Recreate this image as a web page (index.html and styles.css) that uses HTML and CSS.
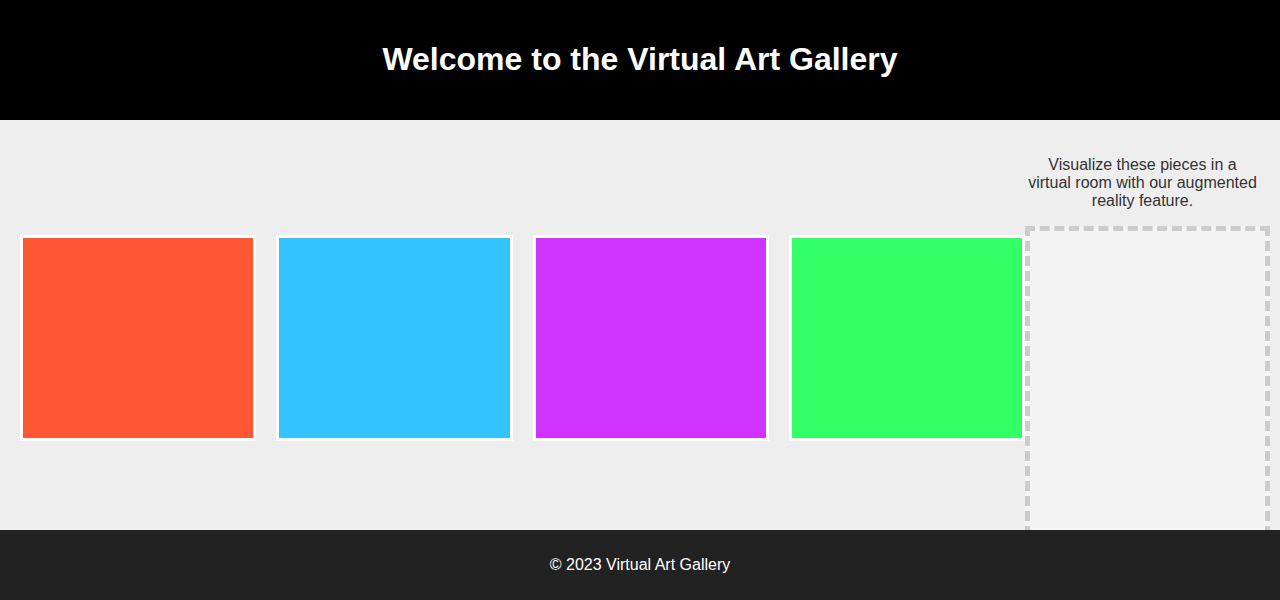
FILE: index.html
```html
<!DOCTYPE html>
<html lang="en">
<head>
<meta charset="utf-8">
<title>Virtual Art Gallery</title>
<link rel="stylesheet" href="styles.css">
</head>
<body>
<header class="site-header">
  <h1 class="title">Welcome to the Virtual Art Gallery</h1>
</header>
<main class="gallery">
  <div class="pieces">
    <div class="art-piece art-orange"></div>
    <div class="art-piece art-blue"></div>
    <div class="art-piece art-purple"></div>
    <div class="art-piece art-green"></div>
  </div>
  <section class="ar-section">
    <p class="ar-text">Visualize these pieces in a virtual room with our augmented reality feature.</p>
    <div class="ar-viewer"></div>
  </section>
</main>
<footer class="site-footer">
  <p class="copy">© 2023 Virtual Art Gallery</p>
</footer>
</body>
</html>
```

FILE: styles.css
```css
html, body {
  margin: 0;
  padding: 0;
}
body {
  height: 100vh;
  display: grid;
  grid-template-rows: 120px 1fr 70px;
  font-family: "Liberation Sans", Arial, sans-serif;
  background: #eeeeee;
  color: #333333;
}
.site-header {
  background: #000000;
  color: #ffffff;
  display: flex;
  align-items: center;
  justify-content: center;
  padding-bottom: 2px;
  box-sizing: border-box;
}
.title {
  margin: 0;
  font-size: 32px;
  font-weight: bold;
  line-height: 37px;
}
.gallery {
  min-height: 0;
  overflow: hidden;
  display: flex;
  align-items: flex-start;
  padding: 20px 20px 0 20px;
  box-sizing: border-box;
}
.pieces {
  flex: 1;
  display: flex;
  gap: 20px;
  margin-top: 95px;
}
.art-piece {
  flex: 1;
  height: 200px;
  border: 3px solid #ffffff;
}
.art-orange { background: #ff5733; }
.art-blue { background: #33c4ff; }
.art-purple { background: #d033ff; }
.art-green { background: #33ff66; }
.ar-section {
  width: 235px;
  flex: none;
  text-align: center;
}
.ar-text {
  margin: 16px 0;
  font-size: 16px;
  line-height: 18px;
  color: #333333;
}
.ar-viewer {
  width: 235px;
  height: 300px;
  border: 5px dashed #cccccc;
  background: #f4f4f4;
}
.site-footer {
  background: #222222;
  color: #ffffff;
  display: flex;
  align-items: center;
  justify-content: center;
}
.copy {
  margin: 0;
  font-size: 16px;
}
```
